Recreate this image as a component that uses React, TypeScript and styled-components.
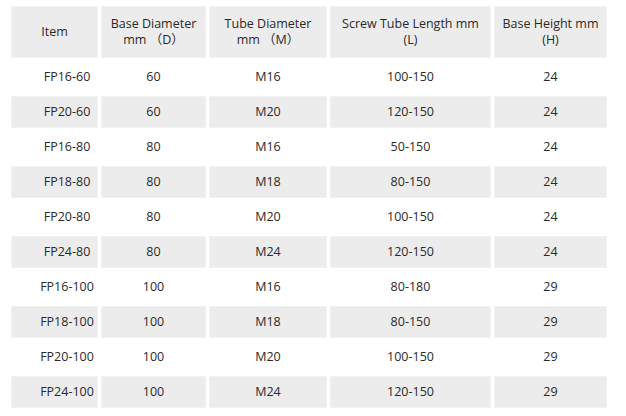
import React from 'react';
import styled, { createGlobalStyle } from 'styled-components';

const GlobalStyle = createGlobalStyle`
  body {
    margin: 3px 8px;
    background: #ffffff;
    font-family: 'Open Sans', 'Noto Sans CJK KR', sans-serif;
  }
`;

const SpecTable = styled.table`
  border-collapse: separate;
  border-spacing: 3px;
  font-size: 12.5px;
  line-height: 16px;
  color: #2a2a2a;
  table-layout: fixed;
  width: 602px;
`;

const HeadCell = styled.th`
  background: #ececec;
  box-shadow: inset 0 0 0 1px #f2f2f2;
  font-weight: 400;
  height: 51px;
  padding: 0 0 1px;
  text-align: center;
  vertical-align: middle;
`;

const Row = styled.tr<{ $shade: boolean }>`
  td {
    background: ${(p) => (p.$shade ? '#ececec' : '#ffffff')};
    box-shadow: ${(p) => (p.$shade ? 'inset 0 0 0 1px #f2f2f2' : 'none')};
  }
`;

const Cell = styled.td<{ $pad?: number }>`
  height: 31px;
  padding: 0 0 1px ${(p) => p.$pad ?? 0}px;
  text-align: center;
  vertical-align: middle;
`;

const rows = [
  ['FP16-60', '60', 'M16', '100-150', '24'],
  ['FP20-60', '60', 'M20', '120-150', '24'],
  ['FP16-80', '80', 'M16', '50-150', '24'],
  ['FP18-80', '80', 'M18', '80-150', '24'],
  ['FP20-80', '80', 'M20', '100-150', '24'],
  ['FP24-80', '80', 'M24', '120-150', '24'],
  ['FP16-100', '100', 'M16', '80-180', '29'],
  ['FP18-100', '100', 'M18', '80-150', '29'],
  ['FP20-100', '100', 'M20', '100-150', '29'],
  ['FP24-100', '100', 'M24', '120-150', '29'],
];

const App = () => {
  return (
    <>
      <GlobalStyle />
      <SpecTable>
        <colgroup>
          <col style={{ width: 87 }} />
          <col style={{ width: 105 }} />
          <col style={{ width: 118 }} />
          <col style={{ width: 161 }} />
          <col style={{ width: 113 }} />
        </colgroup>
        <thead>
          <tr>
            <HeadCell>Item</HeadCell>
            <HeadCell>
              Base Diameter
              <br />
              mm （D）
            </HeadCell>
            <HeadCell>
              Tube Diameter
              <br />
              mm （M）
            </HeadCell>
            <HeadCell>
              Screw Tube Length mm
              <br />
              (L)
            </HeadCell>
            <HeadCell>
              Base Height mm
              <br />
              (H)
            </HeadCell>
          </tr>
        </thead>
        <tbody>
          {rows.map((r, i) => (
            <Row key={r[0]} $shade={i % 2 === 1}>
              <Cell $pad={25}>{r[0]}</Cell>
              <Cell>{r[1]}</Cell>
              <Cell>{r[2]}</Cell>
              <Cell>{r[3]}</Cell>
              <Cell>{r[4]}</Cell>
            </Row>
          ))}
        </tbody>
      </SpecTable>
    </>
  );
};

export default App;
